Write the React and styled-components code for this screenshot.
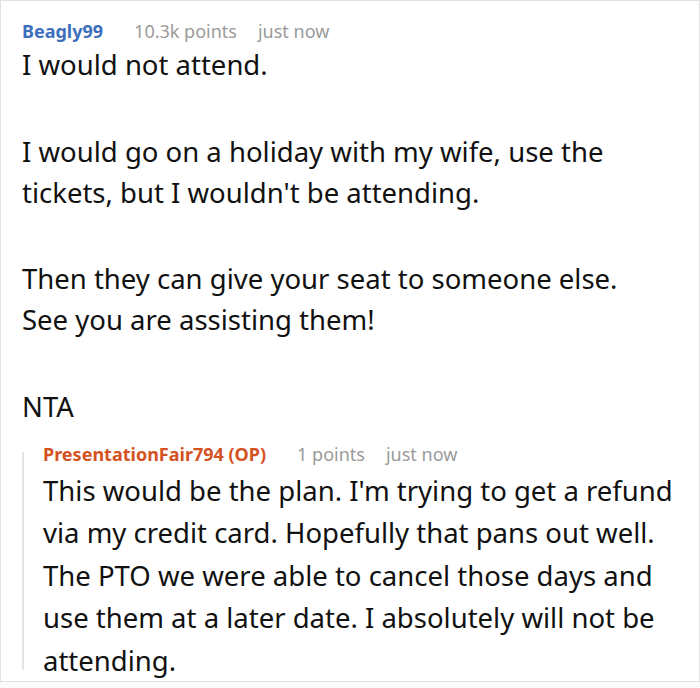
import React from 'react';
import styled, { createGlobalStyle } from 'styled-components';

const GlobalStyle = createGlobalStyle`
  html, body {
    margin: 0;
    padding: 0;
    background: #fbfbfb;
  }
  body {
    font-family: "Noto Sans", "Open Sans", sans-serif;
  }
`;

// ─── Layout ───
const Frame = styled.div`
  box-sizing: border-box;
  width: 700px;
  height: 682px;
  border: 1px solid #e2e2e2;
  padding: 18px 0 0 21px;
  overflow: hidden;
  background: #fff;
`;

const Comment = styled.div`
  display: flex;
  flex-direction: column;
`;

const Meta = styled.div`
  display: flex;
  align-items: baseline;
  gap: 21px;
  font-size: 18px;
  line-height: 24px;
`;

const Author = styled.span`
  font-weight: 700;
  color: ${p => (p.$op ? '#d4521f' : '#3d6fbc')};
  margin-right: 10px;
`;

const Faint = styled.span`
  color: #9a9a9a;
`;

const Body = styled.div`
  color: #111;
  font-size: 27.5px;
  line-height: 41px;
  margin-top: 1px;
`;

const Para = styled.p`
  margin: 0 0 45.5px;
  &:last-child {
    margin-bottom: 0;
  }
`;

const Line = styled.span`
  display: block;
  white-space: nowrap;
`;

const Reply = styled.div`
  display: flex;
  margin-top: 15px;
`;

const Thread = styled.div`
  width: 2px;
  background: #e4e4e4;
  margin: 10px 19px 0 0;
  height: 218px;
`;

const ReplyBody = styled(Body)`
  line-height: 42.5px;
  margin-top: 4px;
`;

const App = () => (
  <>
    <GlobalStyle />
    <Frame>
      <Comment>
        <Meta>
          <Author>Beagly99</Author>
          <Faint>10.3k points</Faint>
          <Faint>just now</Faint>
        </Meta>
        <Body>
          <Para>I would not attend.</Para>
          <Para>
            <Line>I would go on a holiday with my wife, use the</Line>
            <Line>tickets, but I wouldn't be attending.</Line>
          </Para>
          <Para>
            <Line>Then they can give your seat to someone else.</Line>
            <Line>See you are assisting them!</Line>
          </Para>
          <Para>NTA</Para>
        </Body>
      </Comment>

      <Reply>
        <Thread />
        <Comment>
          <Meta>
            <Author $op>PresentationFair794 (OP)</Author>
            <Faint>1 points</Faint>
            <Faint>just now</Faint>
          </Meta>
          <ReplyBody>
            <Line>This would be the plan. I'm trying to get a refund</Line>
            <Line>via my credit card. Hopefully that pans out well.</Line>
            <Line>The PTO we were able to cancel those days and</Line>
            <Line>use them at a later date. I absolutely will not be</Line>
            <Line>attending.</Line>
          </ReplyBody>
        </Comment>
      </Reply>
    </Frame>
  </>
);

export default App;
